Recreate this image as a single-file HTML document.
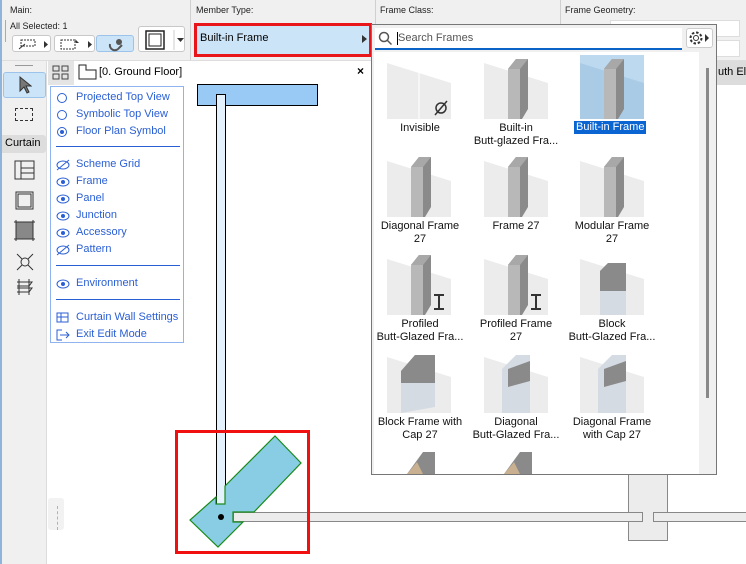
<!DOCTYPE html>
<html><head><meta charset="utf-8">
<style>
*{margin:0;padding:0;box-sizing:border-box}
body{width:746px;height:564px;overflow:hidden;background:#fff;font-family:"Liberation Sans",sans-serif;position:relative;font-size:11px;color:#000}
.a{position:absolute}
.lbl{font-size:9px;color:#222}
.btn{position:absolute;background:#fff;border:1px solid #c8c8c8;border-radius:3px}
.opt{position:absolute;left:8px;color:#2a5fd4;font-size:11px}
.ic{position:absolute;left:-3px;top:1px}
.th{position:absolute;width:64px;height:64px}
.cap{position:absolute;width:100px;text-align:center;font-size:11px;line-height:13px;color:#111}
</style></head><body>
<!-- toolbar -->
<div class="a" style="left:0;top:0;width:746px;height:61px;background:#f0f0f0;border-bottom:1px solid #ddd"></div>
<div class="a" style="left:0;top:0;width:2px;height:564px;background:#8fb4dc"></div>
<div class="a" style="left:190px;top:0;width:1px;height:60px;background:#d0d0d0"></div>
<div class="a" style="left:375px;top:0;width:1px;height:24px;background:#d0d0d0"></div>
<div class="a" style="left:560px;top:0;width:1px;height:24px;background:#d0d0d0"></div>
<div class="a lbl" style="left:10px;top:5px">Main:</div>
<div class="a lbl" style="left:10px;top:21px">All Selected: 1</div>
<div class="a" style="left:5px;top:20px;width:1px;height:22px;background:#aaa"></div>
<div class="a lbl" style="left:196px;top:5px">Member Type:</div>
<div class="a lbl" style="left:380px;top:5px">Frame Class:</div>
<div class="a lbl" style="left:565px;top:5px">Frame Geometry:</div>
<div class="a" style="left:610px;top:20px;width:130px;height:17px;background:#fff;border:1px solid #ddd"></div>
<div class="a" style="left:610px;top:40px;width:130px;height:17px;background:#fff;border:1px solid #ddd"></div>
<div class="btn" style="left:12px;top:35px;width:39px;height:17px"><svg width="39" height="17"><rect x="8" y="4" width="14" height="6" fill="none" stroke="#333" stroke-dasharray="2 1"/><path d="M6 13 L12 8" stroke="#333"/><path d="M31 5v7l4-3.5z" fill="#333"/></svg></div>
<div class="btn" style="left:54px;top:35px;width:41px;height:17px"><svg width="41" height="17"><rect x="6" y="4" width="14" height="9" fill="none" stroke="#333" stroke-dasharray="2 1"/><path d="M20 3l4 4h-3z" fill="#333"/><path d="M33 5v7l4-3.5z" fill="#333"/></svg></div>
<div class="btn" style="left:96px;top:35px;width:38px;height:17px;background:#cce4f7;border-color:#9cc3ea"><svg width="38" height="17"><path d="M13 8a5 5 0 0 0 9 4l3-3" fill="none" stroke="#555" stroke-width="2"/><circle cx="22" cy="6" r="3" fill="#555"/></svg></div>
<div class="btn" style="left:138px;top:26px;width:47px;height:26px"><svg width="47" height="26"><rect x="7" y="4" width="18" height="18" fill="none" stroke="#222" stroke-width="1.5"/><rect x="10" y="7" width="12" height="12" fill="none" stroke="#222"/><line x1="35" y1="3" x2="35" y2="23" stroke="#ccc"/><path d="M38 11h7l-3.5 4z" fill="#333"/></svg></div>
<div class="a" style="left:194px;top:23px;width:178px;height:34px;border:3px solid #e8161b;background:#cce4f7"></div>
<div class="a" style="left:200px;top:32px;font-size:11px">Built-in Frame</div>
<div class="a" style="left:362px;top:35px;width:0;height:0;border-left:5px solid #333;border-top:4px solid transparent;border-bottom:4px solid transparent"></div>
<!-- left palette -->
<div class="a" style="left:2px;top:61px;width:45px;height:503px;background:#f0f0f0;border-right:1px solid #ddd"></div>
<div class="a" style="left:15px;top:65px;width:18px;height:1px;background:#999"></div>
<div class="a" style="left:3px;top:72px;width:43px;height:26px;background:#cce4f7;border:1px solid #9cc3ea;border-radius:3px"></div>
<svg class="a" style="left:18px;top:75px" width="14" height="20"><path d="M2 2v14l4-4 3 6 2-1-3-6h5z" fill="#777" stroke="#333"/></svg>
<div class="a" style="left:15px;top:108px;width:18px;height:13px;border:1px dashed #333"></div>
<div class="a" style="left:2px;top:135px;width:44px;height:18px;background:#ddd;border-radius:0 3px 3px 0;font-size:11px;padding:2px 0 0 3px">Curtain</div>
<svg class="a" style="left:12px;top:158px" width="26" height="150" fill="none" stroke="#333">
<rect x="3" y="3" width="19" height="18"/><path d="M9 3v18M9 10h13M9 15h13"/>
<rect x="4" y="34" width="17" height="17"/><rect x="6" y="36" width="13" height="13"/>
<rect x="4" y="64" width="17" height="17" fill="#888"/><path d="M2 64h21M2 81h21M4 62v21M21 62v21"/>
<circle cx="13" cy="104" r="4"/><path d="M10 101l-5-5M16 101l5-5M10 107l-5 5M16 107l5 5"/>
<path d="M5 124h15l-3 4H5M5 130h15l-3 4H5M7 121v16M17 121v16"/>
</svg>
<div class="a" style="left:48px;top:498px;width:16px;height:32px;background:#f2f2f2;border-radius:3px"></div>
<div class="a" style="left:57px;top:506px;width:1px;height:24px;border-left:1px dashed #f0a070"></div>
<!-- canvas header -->
<div class="a" style="left:48px;top:61px;width:26px;height:24px;background:#e4e4e4"></div>
<svg class="a" style="left:52px;top:65px" width="18" height="16" fill="none" stroke="#444"><rect x="1" y="1" width="6" height="5"/><rect x="10" y="1" width="6" height="5"/><rect x="1" y="9" width="6" height="5"/><rect x="10" y="9" width="6" height="5"/></svg>
<svg class="a" style="left:78px;top:64px" width="20" height="16" fill="none" stroke="#222"><path d="M1 1h7v5h10v9H1z"/></svg>
<div class="a" style="left:99px;top:66px;font-size:11px">[0. Ground Floor]</div>
<div class="a" style="left:357px;top:64px;font-size:12px;font-weight:bold">×</div>
<!-- options panel -->
<div class="a" style="left:50px;top:86px;width:134px;height:257px;border:1px solid #8fb4f0;background:#fff">
<div class="opt" style="top:4px"><svg class="ic" width="12" height="12"><circle cx="6" cy="6" r="4.5" fill="none" stroke="#2a5fd4"/></svg><span style="margin-left:17px">Projected Top View</span></div>
<div class="opt" style="top:21px"><svg class="ic" width="12" height="12"><circle cx="6" cy="6" r="4.5" fill="none" stroke="#2a5fd4"/></svg><span style="margin-left:17px">Symbolic Top View</span></div>
<div class="opt" style="top:38px"><svg class="ic" width="12" height="12"><circle cx="6" cy="6" r="4.5" fill="none" stroke="#2a5fd4"/><circle cx="6" cy="6" r="2" fill="#2a5fd4"/></svg><span style="margin-left:17px">Floor Plan Symbol</span></div>
<div class="a" style="left:5px;top:59px;width:124px;height:1px;background:#2a5fd4"></div>
<div class="opt" style="top:71px"><svg class="ic" width="16" height="12"><ellipse cx="7" cy="6" rx="6" ry="4" fill="none" stroke="#2a5fd4"/><path d="M1 11L13 1" stroke="#2a5fd4"/></svg><span style="margin-left:17px">Scheme Grid</span></div>
<div class="opt" style="top:88px"><svg class="ic" width="16" height="12"><ellipse cx="7" cy="6" rx="6" ry="4" fill="none" stroke="#2a5fd4"/><circle cx="7" cy="6" r="2" fill="#2a5fd4"/></svg><span style="margin-left:17px">Frame</span></div>
<div class="opt" style="top:105px"><svg class="ic" width="16" height="12"><ellipse cx="7" cy="6" rx="6" ry="4" fill="none" stroke="#2a5fd4"/><circle cx="7" cy="6" r="2" fill="#2a5fd4"/></svg><span style="margin-left:17px">Panel</span></div>
<div class="opt" style="top:122px"><svg class="ic" width="16" height="12"><ellipse cx="7" cy="6" rx="6" ry="4" fill="none" stroke="#2a5fd4"/><circle cx="7" cy="6" r="2" fill="#2a5fd4"/></svg><span style="margin-left:17px">Junction</span></div>
<div class="opt" style="top:139px"><svg class="ic" width="16" height="12"><ellipse cx="7" cy="6" rx="6" ry="4" fill="none" stroke="#2a5fd4"/><circle cx="7" cy="6" r="2" fill="#2a5fd4"/></svg><span style="margin-left:17px">Accessory</span></div>
<div class="opt" style="top:156px"><svg class="ic" width="16" height="12"><ellipse cx="7" cy="6" rx="6" ry="4" fill="none" stroke="#2a5fd4"/><path d="M1 11L13 1" stroke="#2a5fd4"/></svg><span style="margin-left:17px">Pattern</span></div>
<div class="a" style="left:5px;top:178px;width:124px;height:1px;background:#2a5fd4"></div>
<div class="opt" style="top:190px"><svg class="ic" width="16" height="12"><ellipse cx="7" cy="6" rx="6" ry="4" fill="none" stroke="#2a5fd4"/><circle cx="7" cy="6" r="2" fill="#2a5fd4"/></svg><span style="margin-left:17px">Environment</span></div>
<div class="a" style="left:5px;top:212px;width:124px;height:1px;background:#2a5fd4"></div>
<div class="opt" style="top:224px"><svg class="ic" width="14" height="12" fill="none" stroke="#2a5fd4"><rect x="1" y="1" width="11" height="9"/><path d="M5 1v9M1 5h11"/></svg><span style="margin-left:17px">Curtain Wall Settings</span></div>
<div class="opt" style="top:241px"><svg class="ic" width="14" height="12" fill="none" stroke="#2a5fd4"><path d="M6 1H1v10h5M4 6h9M10 3l3 3-3 3"/></svg><span style="margin-left:17px">Exit Edit Mode</span></div>
</div>
<!-- drawing -->
<svg class="a" style="left:0;top:0" width="746" height="564">
<rect x="197.5" y="84.5" width="120" height="21" fill="#99c9f5" stroke="#000"/>
<rect x="216.5" y="94.5" width="9" height="410" fill="#e3f2fc" stroke="#000"/>
<rect x="628.5" y="474.5" width="39" height="66" fill="#ececec" stroke="#888"/>
<rect x="233.5" y="512.5" width="409" height="9" fill="#ececec" stroke="#888"/>
<rect x="653.5" y="512.5" width="100" height="9" fill="#ececec" stroke="#888"/>
<polygon points="275,436 301,463 254,512 233,512 233,522 243,522 218,547 190,520 216,497 216,504 225,504 225,486" fill="#88cde4" stroke="#1a8a1a" stroke-width="1.2"/>
<circle cx="221" cy="517" r="3" fill="#000"/>
<rect x="176.5" y="431.5" width="132" height="121" fill="none" stroke="#f01010" stroke-width="3"/>
</svg>
<!-- right gray tab -->
<div class="a" style="left:716px;top:61px;width:30px;height:24px;background:#dcdcdc;font-size:11px;padding:5px 0 0 2px;overflow:hidden;white-space:nowrap">uth Ele</div>
<!-- popup -->
<div class="a" style="left:371px;top:24px;width:346px;height:451px;background:#f0f0f0;border:1px solid #777"></div>
<div class="a" style="left:375px;top:28px;width:307px;height:22px;background:#fff;border-bottom:2px solid #0a64c8"></div>
<svg class="a" style="left:378px;top:31px" width="16" height="16" fill="none" stroke="#555" stroke-width="1.5"><circle cx="6" cy="6" r="4.5"/><path d="M9.5 9.5l4 4"/></svg>
<div class="a" style="left:397px;top:32px;width:1px;height:13px;background:#000"></div>
<div class="a" style="left:398px;top:32px;font-size:11px;color:#555">Search Frames</div>
<div class="a" style="left:686px;top:28px;width:27px;height:20px;background:#fff;border:1px solid #ccc;border-radius:3px"></div>
<svg class="a" style="left:688px;top:30px" width="24" height="16" fill="none" stroke="#333"><circle cx="8" cy="8" r="2.5"/><circle cx="8" cy="8" r="5.5" stroke-dasharray="2.5 1.8" stroke-width="2"/><path d="M17 4v8l4-4z" fill="#333" stroke="none"/></svg>
<div class="a" style="left:374px;top:52px;width:325px;height:422px;background:#fff"></div>
<div class="a" style="left:706px;top:68px;width:3px;height:330px;background:#888"></div>
<svg class="a" style="left:374px;top:52px" width="325" height="422">
<defs>
<g id="glass"><path d="M0 8l64 20v36H0z" fill="#ececec"/></g>
<g id="col"><path d="M24 64V14l8-10h12v50l-6 10z" fill="#8a8a8a"/><path d="M24 14l8-10h12l-8 10z" fill="#a8a8a8"/><path d="M24 14h12v50H24z" fill="#b8b8b8"/></g>
</defs>
<!-- row1 -->
<g transform="translate(13,3)"><path d="M0 8l64 20v36H0z" fill="#ececec"/><path d="M32 12v52" stroke="#fff"/><circle cx="54" cy="53" r="5" fill="none" stroke="#333" stroke-width="1.5"/><path d="M48 60l12-14" stroke="#333" stroke-width="1.5"/></g>
<g transform="translate(110,3)"><use href="#glass"/><use href="#col"/></g>
<rect x="206" y="3" width="64" height="64" fill="#bcd9f0"/>
<g transform="translate(206,3)"><path d="M0 8l64 20v36H0z" fill="#a9cbe5"/><use href="#col"/></g>
<!-- row2 -->
<g transform="translate(13,101)"><use href="#glass"/><use href="#col"/></g>
<g transform="translate(110,101)"><use href="#glass"/><use href="#col"/></g>
<g transform="translate(206,101)"><use href="#glass"/><use href="#col"/></g>
<!-- row3 -->
<g transform="translate(13,199)"><use href="#glass"/><use href="#col"/><path d="M47 44h10M47 58h10M52 44v14" stroke="#333" stroke-width="2"/></g>
<g transform="translate(110,199)"><use href="#glass"/><use href="#col"/><path d="M47 44h10M47 58h10M52 44v14" stroke="#333" stroke-width="2"/></g>
<g transform="translate(206,199)"><path d="M0 8l64 20v36H0z" fill="#ececec"/><path d="M20 64V20l8-8h18v52z" fill="#d4dbe2"/><path d="M20 20l8-8h18v28H20z" fill="#8a8a8a"/></g>
<!-- row4 -->
<g transform="translate(13,297)"><use href="#glass"/><path d="M14 64V22l14-16h20v52z" fill="#d4dbe2"/><path d="M14 22l14-16h20v28H14z" fill="#8a8a8a"/></g>
<g transform="translate(110,297)"><use href="#glass"/><path d="M18 64V20l14-14h14v58z" fill="#d4dbe2"/><path d="M24 20l22-8v20l-22 6z" fill="#8a8a8a"/></g>
<g transform="translate(206,297)"><use href="#glass"/><path d="M18 64V20l14-14h14v58z" fill="#d4dbe2"/><path d="M24 20l22-8v20l-22 6z" fill="#8a8a8a"/></g>
<!-- row5 partial -->
<g transform="translate(13,395)"><path d="M20 27l16-22h12v22z" fill="#8a8a8a"/><path d="M20 27l10-12 6 12z" fill="#c8b090"/></g>
<g transform="translate(110,395)"><path d="M20 27l16-22h12v22z" fill="#8a8a8a"/><path d="M20 27l10-12 6 12z" fill="#c8b090"/></g>
</svg>
<div class="cap" style="left:370px;top:122px">Invisible</div>
<div class="cap" style="left:466px;top:122px">Built-in<br>Butt-glazed Fra...</div>
<div class="a" style="left:574px;top:121px;background:#0a64d2;color:#fff;font-size:11px;line-height:13px;padding:0 2px">Built-in Frame</div>
<div class="cap" style="left:370px;top:220px">Diagonal Frame<br>27</div>
<div class="cap" style="left:466px;top:220px">Frame 27</div>
<div class="cap" style="left:562px;top:220px">Modular Frame<br>27</div>
<div class="cap" style="left:370px;top:318px">Profiled<br>Butt-Glazed Fra...</div>
<div class="cap" style="left:466px;top:318px">Profiled Frame<br>27</div>
<div class="cap" style="left:562px;top:318px">Block<br>Butt-Glazed Fra...</div>
<div class="cap" style="left:370px;top:416px">Block Frame with<br>Cap 27</div>
<div class="cap" style="left:466px;top:416px">Diagonal<br>Butt-Glazed Fra...</div>
<div class="cap" style="left:562px;top:416px">Diagonal Frame<br>with Cap 27</div>
</body></html>
